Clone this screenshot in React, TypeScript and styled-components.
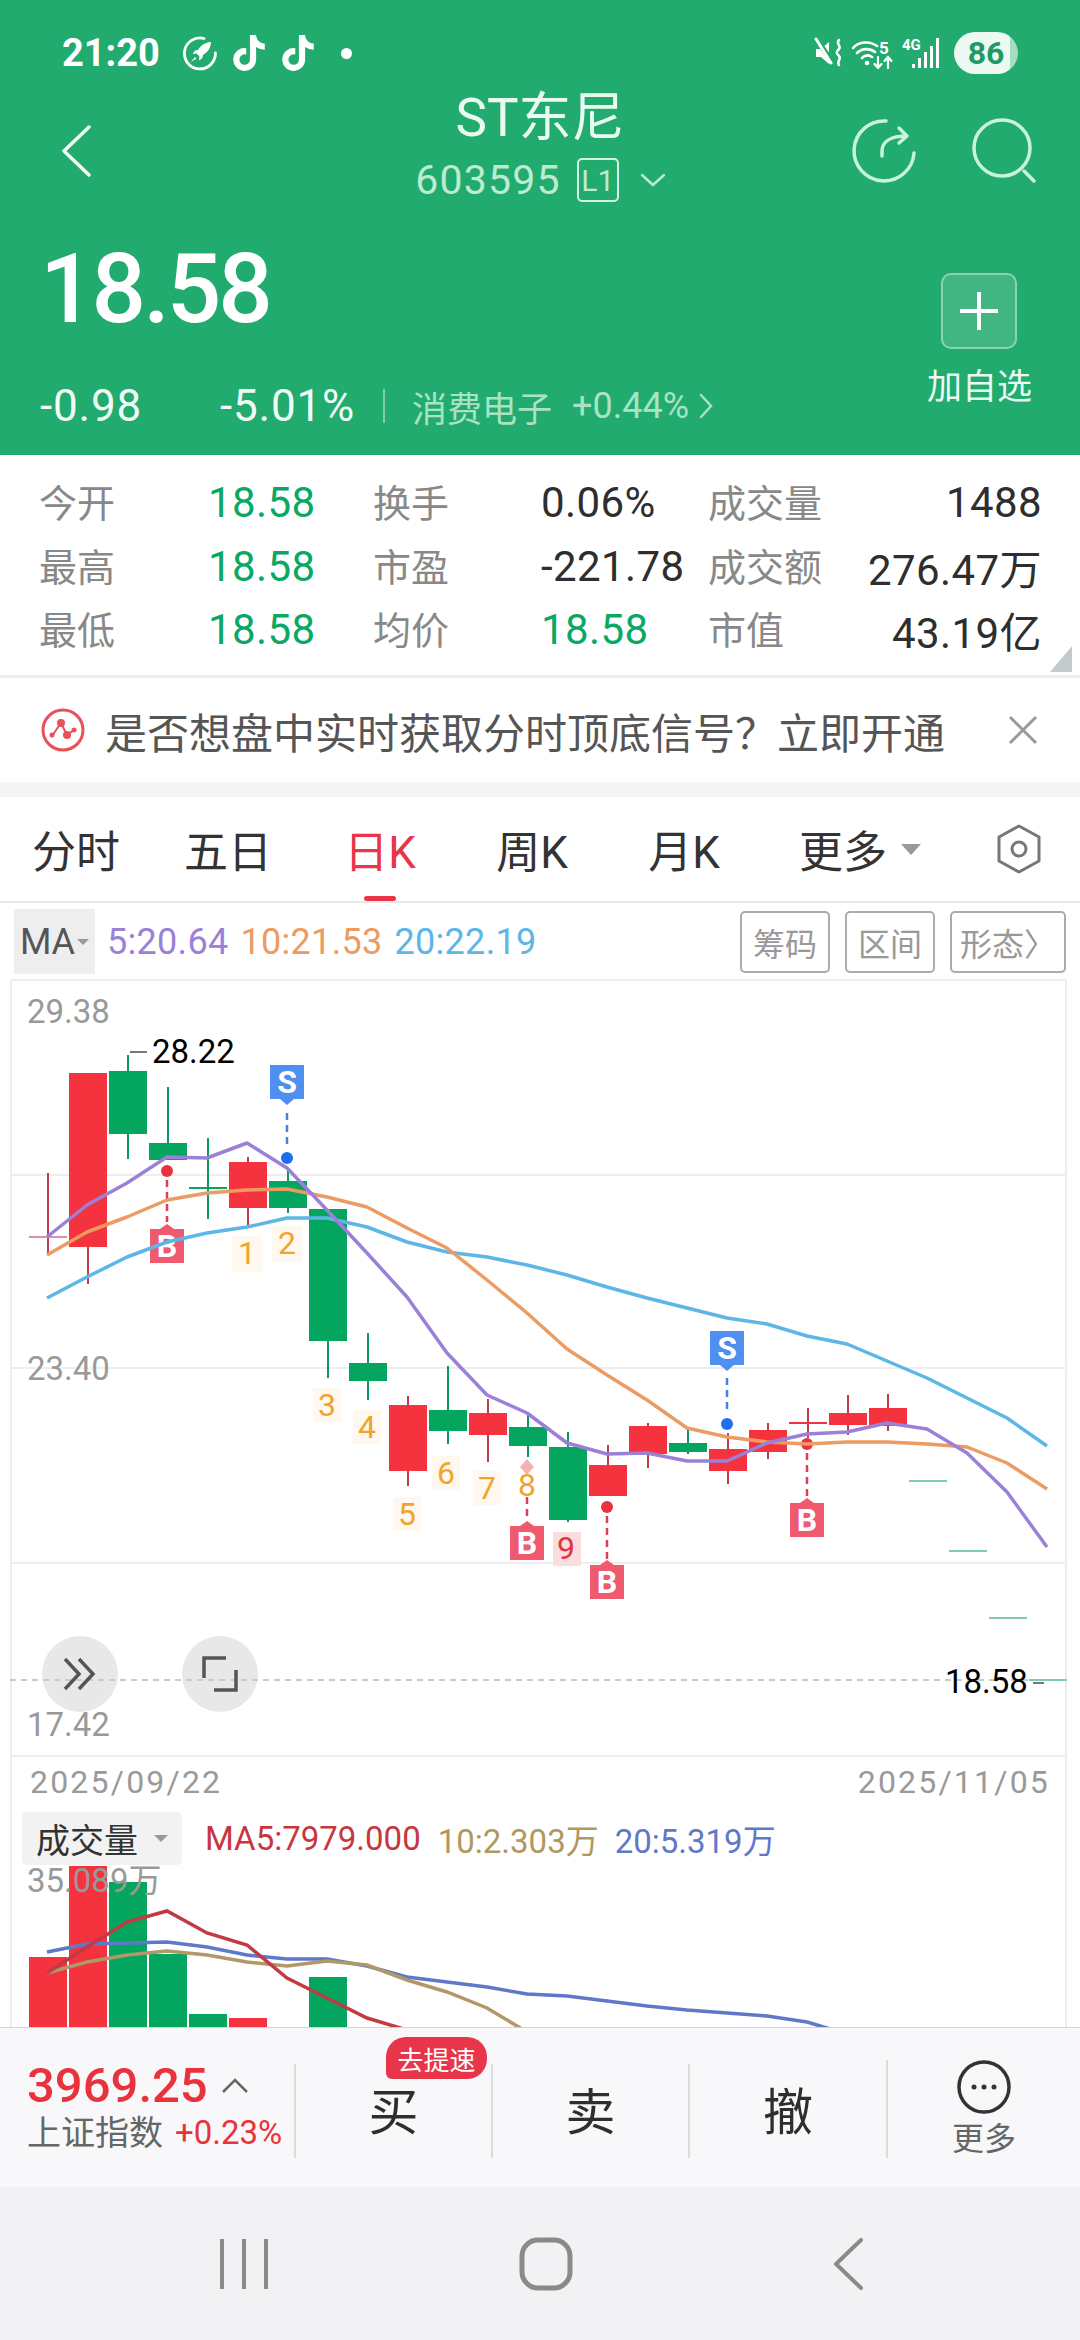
import React from "react";
import styled, { createGlobalStyle } from "styled-components";
import { FaTiktok } from "react-icons/fa6";

const FONT = `Roboto, "Noto Sans CJK SC", sans-serif`;

const GlobalStyle = createGlobalStyle`
  html, body { margin: 0; padding: 0; background: #fff; }
  body { font-family: ${FONT}; }
`;

// chart data, all in page pixels (the svg viewBoxes use the same numbers)
const X0 = 48;
const STEP = 40;
const xAt = (i: number) => X0 + STEP * i;

type Candle = [number, number, number, number, number, "r" | "g" | "f"];
const CANDLES: Candle[] = [
  [0, 1236, 1238, 1173, 1253, "r"],
  [1, 1073, 1247, 1073, 1284, "r"],
  [2, 1071, 1134, 1055, 1159, "g"],
  [3, 1143, 1160, 1087, 1160, "g"],
  [4, 1187, 1189, 1138, 1219, "g"],
  [5, 1162, 1208, 1157, 1225, "r"],
  [6, 1181, 1208, 1170, 1213, "g"],
  [7, 1209, 1341, 1209, 1378, "g"],
  [8, 1363, 1381, 1333, 1400, "g"],
  [9, 1405, 1471, 1396, 1486, "r"],
  [10, 1410, 1431, 1366, 1444, "g"],
  [11, 1413, 1435, 1399, 1462, "r"],
  [12, 1427, 1446, 1413, 1457, "g"],
  [13, 1447, 1520, 1432, 1522, "g"],
  [14, 1465, 1496, 1445, 1496, "r"],
  [15, 1426, 1454, 1423, 1468, "r"],
  [16, 1443, 1452, 1429, 1454, "g"],
  [17, 1449, 1471, 1433, 1484, "r"],
  [18, 1430, 1452, 1423, 1459, "r"],
  [19, 1422, 1424, 1408, 1438, "r"],
  [20, 1413, 1425, 1395, 1435, "r"],
  [21, 1408, 1426, 1394, 1431, "r"],
  [22, 1480, 1482, 1480, 1482, "f"],
  [23, 1550, 1552, 1550, 1552, "f"],
  [24, 1617, 1619, 1617, 1619, "f"],
  [25, 1679, 1681, 1679, 1681, "f"],
];

const MA5 = [1237, 1205, 1183, 1157, 1158, 1143, 1168, 1210, 1253, 1297, 1353, 1395, 1413, 1443, 1454, 1453, 1461, 1461, 1443, 1434, 1432, 1423, 1429, 1453, 1492, 1547];
const MA10 = [1255, 1232, 1217, 1200, 1193, 1190, 1189, 1197, 1207, 1228, 1248, 1280, 1313, 1349, 1375, 1400, 1428, 1437, 1442, 1444, 1442, 1442, 1444, 1447, 1463, 1489];
const MA20 = [1298, 1277, 1257, 1242, 1233, 1227, 1218, 1218, 1227, 1242, 1252, 1257, 1265, 1275, 1287, 1298, 1308, 1318, 1324, 1336, 1344, 1361, 1378, 1398, 1418, 1446];

const VOL_BARS: [number, number, string][] = [
  [0, 1957, "#f5333f"],
  [1, 1866, "#f5333f"],
  [2, 1882, "#04a55f"],
  [3, 1954, "#04a55f"],
  [4, 2014, "#04a55f"],
  [5, 2018, "#f5333f"],
  [7, 1977, "#04a55f"],
];
const VOL_MA5 = [1973, 1947, 1922, 1911, 1933, 1945, 1978, 1998, 2018, 2030];
const VOL_MA10 = [1973, 1962, 1955, 1951, 1955, 1962, 1966, 1961, 1965, 1980, 1992, 2008, 2032];
const VOL_MA20 = [1952, 1944, 1943, 1942, 1947, 1955, 1959, 1959, 1966, 1977, 1982, 1987, 1994, 1996, 2001, 2006, 2010, 2013, 2016, 2022, 2034];

const toPoints = (ys: number[]) => ys.map((y, i) => `${xAt(i) - 1},${y}`).join(" ");

const STATS = [
  ["今开", "18.58", "换手", "0.06%", "成交量", "1488"],
  ["最高", "18.58", "市盈", "-221.78", "成交额", "276.47万"],
  ["最低", "18.58", "均价", "18.58", "市值", "43.19亿"],
];
const TABS = ["分时", "五日", "日K", "周K", "月K"];

const Page = styled.div`
  width: 1080px;
  height: 2340px;
  overflow: hidden;
  display: flex;
  flex-direction: column;
  background: #fff;
  font-family: ${FONT};
`;

const Header = styled.header`
  height: 455px;
  background: #22ab6f;
  color: #fff;
  display: flex;
  flex-direction: column;
  flex: none;
`;

const StatusBar = styled.div`
  height: 66px;
  padding: 20px 62px 0;
  display: flex;
  align-items: center;
`;
const Clock = styled.span`
  font-size: 38px;
  font-weight: 700;
  margin-right: 22px;
`;
const StatusLeft = styled.div`
  display: flex;
  align-items: center;
  gap: 13px;
`;
const StatusDot = styled.i`
  width: 11px;
  height: 11px;
  border-radius: 50%;
  background: #fff;
  margin-left: 12px;
`;
const StatusRight = styled.div`
  margin-left: auto;
  display: flex;
  align-items: center;
  gap: 8px;
`;
const Battery = styled.div`
  width: 64px;
  height: 42px;
  margin-left: 6px;
  border-radius: 21px;
  background: linear-gradient(90deg, #edf9f3 88%, #a6dcbf 88%);
  color: #1f9a66;
  font-size: 32px;
  font-weight: 700;
  display: flex;
  align-items: center;
  justify-content: center;
`;

const NavRow = styled.div`
  height: 120px;
  display: grid;
  grid-template-columns: 1fr auto 1fr;
  align-items: start;
`;
const BackSlot = styled.div`
  padding: 39px 0 0 61px;
`;
const TitleBlock = styled.div`
  display: flex;
  flex-direction: column;
  align-items: center;
`;
const Title = styled.div`
  margin-top: 5px;
  font-size: 53px;
  line-height: 54px;
  color: #eafaf2;
`;
const CodeRow = styled.div`
  margin-top: 13px;
  height: 44px;
  display: flex;
  align-items: center;
  color: #bdebd2;
`;
const Code = styled.span`
  font-size: 41px;
  letter-spacing: 1.2px;
`;
const LevelTag = styled.span`
  margin-left: 16px;
  width: 42px;
  height: 44px;
  box-sizing: border-box;
  border: 2px solid #d5f3e3;
  border-radius: 5px;
  font-size: 30px;
  display: flex;
  align-items: center;
  justify-content: center;
`;
const NavIcons = styled.div`
  padding: 21px 38px 0 0;
  display: flex;
  justify-content: flex-end;
  gap: 38px;
`;

const QuoteRow = styled.div`
  flex: 1;
  display: flex;
  justify-content: space-between;
  padding: 0 48px 0 40px;
`;
const QuoteLeft = styled.div`
  display: flex;
  flex-direction: column;
`;
const Price = styled.div`
  margin-top: 33px;
  font-size: 96px;
  line-height: 100px;
  font-weight: 500;
  letter-spacing: -3px;
`;
const DeltaRow = styled.div`
  margin-top: 42px;
  height: 50px;
  display: flex;
  align-items: center;
`;
const Delta = styled.span<{ $w: number }>`
  width: ${(p) => p.$w}px;
  font-size: 44px;
  color: #f0fbf5;
  letter-spacing: 0.8px;
`;
const Bar = styled.i`
  width: 2px;
  height: 34px;
  background: #7fd0a8;
  margin: 0 27px 0 0;
`;
const Sector = styled.span`
  font-size: 35px;
  color: #a9e3c4;
`;
const SectorPct = styled.span`
  margin-left: 20px;
  font-size: 36px;
  color: #a9e3c4;
`;
const AddColumn = styled.div`
  display: flex;
  flex-direction: column;
  align-items: center;
  padding-top: 67px;
`;
const AddButton = styled.div`
  width: 76px;
  height: 76px;
  box-sizing: border-box;
  border: 2px solid rgba(255, 255, 255, 0.4);
  border-radius: 10px;
  background: rgba(255, 255, 255, 0.14);
  display: flex;
  align-items: center;
  justify-content: center;
`;
const AddLabel = styled.div`
  margin-top: 19px;
  font-size: 35px;
  line-height: 40px;
  color: #eafaf2;
`;

const StatsGrid = styled.section`
  position: relative;
  flex: none;
  height: 223px;
  box-sizing: border-box;
  padding: 16px 0 0 39px;
  border-bottom: 3px solid #eeeeee;
  display: grid;
  grid-template-columns: 169px 165px 168px 167px 120px 214px;
  grid-auto-rows: 63.5px;
  align-items: center;
`;
const StatLabel = styled.span`
  margin-top: -4px;
  font-size: 38px;
  color: #888;
  white-space: nowrap;
`;
const StatValue = styled.span<{ $green?: boolean; $right?: boolean }>`
  font-size: 42px;
  letter-spacing: 0.4px;
  color: ${(p) => (p.$green ? "#0aa864" : "#2e2e2e")};
  text-align: ${(p) => (p.$right ? "right" : "left")};
`;
const CornerMark = styled.i`
  position: absolute;
  right: 8px;
  bottom: 3px;
  width: 22px;
  height: 26px;
  background: #c3cbcf;
  clip-path: polygon(100% 0, 100% 100%, 0 100%);
`;

const Banner = styled.section`
  flex: none;
  height: 104px;
  display: flex;
  align-items: center;
  padding: 0 42px 0 41px;
`;
const BannerText = styled.span`
  margin-left: 20px;
  font-size: 42px;
  color: #555;
`;
const BannerClose = styled.svg`
  margin-left: auto;
`;
const Spacer = styled.div`
  flex: none;
  height: 15px;
  background: #f5f5f5;
`;

const Tabs = styled.nav`
  flex: none;
  height: 106px;
  box-sizing: border-box;
  border-bottom: 2px solid #e9e9e9;
  display: grid;
  grid-template-columns: repeat(5, 152px) 200px 1fr;
  align-items: center;
`;
const Tab = styled.div<{ $active?: boolean }>`
  position: relative;
  height: 100%;
  display: flex;
  align-items: center;
  justify-content: center;
  font-size: 44px;
  color: ${(p) => (p.$active ? "#e8354a" : "#333")};
  gap: 14px;
`;
const TabMark = styled.i`
  position: absolute;
  left: 60px;
  bottom: 0;
  width: 32px;
  height: 5px;
  border-radius: 3px;
  background: #e8354a;
`;
const Caret = styled.i<{ $size: number }>`
  width: 0;
  height: 0;
  border-left: ${(p) => p.$size}px solid transparent;
  border-right: ${(p) => p.$size}px solid transparent;
  border-top: ${(p) => p.$size * 1.1}px solid #999;
`;
const SettingSlot = styled.div`
  display: flex;
  justify-content: center;
  margin-left: 37px;
  width: 44px;
`;

const MaRow = styled.div`
  flex: none;
  height: 75px;
  box-sizing: border-box;
  padding: 5px 14px 3px;
  display: flex;
  align-items: center;
`;
const MaPicker = styled.div`
  width: 81px;
  height: 65px;
  background: #eeeeee;
  color: #555;
  font-size: 36px;
  display: flex;
  align-items: center;
  justify-content: center;
  gap: 2px;
`;
const MaValue = styled.span<{ $c: string }>`
  font-size: 36px;
  letter-spacing: 0.3px;
  color: ${(p) => p.$c};
  margin-left: 12px;
`;
const ToolGroup = styled.div`
  margin-left: auto;
  display: flex;
  gap: 15px;
`;
const ToolButton = styled.div<{ $w: number }>`
  width: ${(p) => p.$w}px;
  height: 62px;
  box-sizing: border-box;
  border: 2px solid #ababab;
  border-radius: 5px;
  font-size: 32px;
  color: #999;
  display: flex;
  align-items: center;
  justify-content: center;
`;

const ChartPanel = styled.div`
  position: relative;
  flex: none;
  height: 829px;
`;
const ChartSvg = styled.svg`
  display: block;
`;
const VolumeSvg = styled.svg`
  display: block;
  margin-top: -10px;
`;
const AxisText = styled.text`
  font-family: ${FONT};
  font-size: 33px;
  fill: #999;
`;
const PriceTag = styled.text`
  font-family: ${FONT};
  font-size: 33px;
  fill: #000;
`;
const DateText = styled.text<{ $end?: boolean }>`
  font-family: ${FONT};
  font-size: 32px;
  letter-spacing: 2.2px;
  fill: #999;
  text-anchor: ${(p) => (p.$end ? "end" : "start")};
`;
const PinLetter = styled.text`
  font-family: ${FONT};
  font-size: 32px;
  font-weight: 700;
  fill: #fff;
  text-anchor: middle;
`;
const SeqText = styled.text<{ $c?: string }>`
  font-family: ${FONT};
  font-size: 32px;
  fill: ${(p) => p.$c || "#f2a32c"};
  text-anchor: middle;
`;
const RoundButton = styled.div<{ $left: number }>`
  position: absolute;
  top: 658px;
  left: ${(p) => p.$left}px;
  width: 76px;
  height: 76px;
  border-radius: 50%;
  background: rgba(205, 205, 205, 0.45);
  display: flex;
  align-items: center;
  justify-content: center;
`;

const VolumePanel = styled.div`
  flex: none;
  height: 220px;
  display: flex;
  flex-direction: column;
`;
const VolumeHead = styled.div`
  height: 59px;
  box-sizing: border-box;
  padding: 5px 0 1px 22px;
  display: flex;
  align-items: center;
  background: linear-gradient(90deg, transparent 10px, #eee 10px, #eee 12px, transparent 12px, transparent 1065px, #eee 1065px, #eee 1067px, transparent 1067px);
`;
const VolumePicker = styled.div`
  width: 160px;
  height: 53px;
  border-radius: 5px;
  background: #f2f2f2;
  color: #333;
  font-size: 34px;
  display: flex;
  align-items: center;
  gap: 16px;
  padding-left: 14px;
  box-sizing: border-box;
`;
const VolumeValue = styled.span<{ $c: string; $gap: number }>`
  margin-left: ${(p) => p.$gap}px;
  font-size: 33px;
  color: ${(p) => p.$c};
`;

const BottomBar = styled.footer`
  flex: none;
  height: 160px;
  box-sizing: border-box;
  padding: 36px 0 35px;
  background: #f8f8fa;
  border-top: 1px solid #d4d4d4;
  display: grid;
  grid-template-columns: 294px 197px 197px 198px 1fr;
`;
const IndexCell = styled.div`
  padding-left: 27px;
  display: flex;
  flex-direction: column;
  justify-content: center;
  margin-top: -10px;
`;
const IndexTop = styled.div`
  display: flex;
  align-items: center;
  color: #e8333c;
  font-size: 49px;
  line-height: 54px;
  font-weight: 500;
`;
const IndexBottom = styled.div`
  display: flex;
  align-items: center;
  font-size: 34px;
  line-height: 40px;
  color: #666;
  white-space: nowrap;
`;
const IndexPct = styled.span`
  margin-left: 12px;
  font-size: 33px;
  color: #e8333c;
`;
const TradeCell = styled.div`
  position: relative;
  border-left: 2px solid #dcdcdc;
  padding-bottom: 6px;
  font-size: 50px;
  color: #2e2e2e;
  display: flex;
  align-items: center;
  justify-content: center;
`;
const SpeedBadge = styled.div`
  position: absolute;
  left: 90px;
  top: -27px;
  width: 101px;
  height: 42px;
  border-radius: 20px 20px 20px 6px;
  background: #e8354a;
  color: #fff;
  font-size: 26px;
  display: flex;
  align-items: center;
  justify-content: center;
`;
const MoreCell = styled.div`
  border-left: 2px solid #dcdcdc;
  display: flex;
  flex-direction: column;
  align-items: center;
  margin-top: -4px;
`;
const MoreLabel = styled.span`
  margin-top: 6px;
  font-size: 32px;
  line-height: 38px;
  color: #666;
`;

const SystemNav = styled.div`
  flex: 1;
  background: #f2f2f4;
  padding-left: 93px;
  display: grid;
  grid-template-columns: repeat(3, 302px);
  align-items: center;
  justify-items: center;
`;

// small svg parts
const RocketIcon = () => (
  <svg width="36" height="36" viewBox="0 0 36 36" fill="none">
    <path d="M22 3.5A15.5 15.5 0 1 0 33.4 18" stroke="#fff" strokeWidth="2.8" strokeLinecap="round" />
    <path d="M29 7c-6 .4-10 3-13 8l-3 .6-2.4 3.4 4-.4 2.8 2.8-.4 4 3.4-2.4.6-3c5-3 7.6-7 8-13z" fill="#fff" />
    <path d="M9 27l4-5 1.500 1.500z" fill="#fff" />
  </svg>
);

const MuteIcon = () => (
  <svg width="30" height="32" viewBox="0 0 30 32" fill="none">
    <path d="M2 12h5l8-7v22l-8-7H2z" fill="#fff" />
    <path d="M3 3l17 24" stroke="#22ab6f" strokeWidth="5" />
    <path d="M2 2l15 24" stroke="#fff" strokeWidth="3" strokeLinecap="round" />
    <path d="M25 3c-4 4 3 6 0 9s-3 4 0 7-3 6 0 9" stroke="#fff" strokeWidth="2.500" strokeLinecap="round" />
  </svg>
);

const WifiIcon = () => (
  <svg width="42" height="32" viewBox="0 0 42 32" fill="none">
    <path d="M1 11C7 4 18 4 25 9M5 16c5-5 13-5 18-1M10 21c3-3 7-3 10-1" stroke="#fff" strokeWidth="2.600" strokeLinecap="round" />
    <circle cx="15" cy="26" r="2.300" fill="#fff" />
    <text x="27" y="17" fontSize="17" fontWeight="700" fill="#fff" fontFamily="Roboto">5</text>
    <path d="M26 20v11M22.500 27l3.500 4 3.500-4M36 31V20M32.500 24l3.500-4 3.500 4" stroke="#fff" strokeWidth="2.200" strokeLinecap="round" />
  </svg>
);

const SignalIcon = () => (
  <svg width="38" height="32" viewBox="0 0 38 32" fill="none">
    <text x="0" y="13" fontSize="15" fontWeight="700" fill="#fff" fontFamily="Roboto">4G</text>
    <g fill="#fff">
      <rect x="10" y="27" width="3" height="4" />
      <rect x="16" y="21" width="3" height="10" />
      <rect x="22" y="15" width="3" height="16" />
      <rect x="28" y="9" width="3" height="22" />
      <rect x="34" y="1" width="3" height="30" />
    </g>
  </svg>
);

type PinProps = { x: number; y: number; letter: "B" | "S" };
// y is the top of the 34px square; B has its tip above, S below
const Pin = ({ x, y, letter }: PinProps) => {
  const fill = letter === "S" ? "#4f8ff0" : "#f05a6e";
  const tip = letter === "S" ? `${x - 7},${y + 34} ${x + 7},${y + 34} ${x},${y + 40}` : `${x - 7},${y} ${x + 7},${y} ${x},${y - 5}`;
  return (
    <g>
      <rect x={x - 17} y={y} width="34" height="34" fill={fill} />
      <polygon points={tip} fill={fill} />
      <PinLetter x={x} y={y + 28}>{letter}</PinLetter>
    </g>
  );
};

const Stem = ({ x, y1, y2, c, noDot }: { x: number; y1: number; y2: number; c: string; noDot?: boolean }) => (
  <g>
    <line x1={x} x2={x} y1={y1} y2={y2} stroke={c} strokeWidth="2.500" strokeDasharray="7 5" />
    {!noDot && <circle cx={x} cy={c === "#4a7fe0" ? y2 + 13 : y1 - 9} r="6" fill={c === "#4a7fe0" ? "#1e6ff0" : "#e8323f"} />}
  </g>
);

const CANDLE_COLORS = { r: "#f5333f", g: "#04a55f", f: "#7fccb3" };
const WICK_COLORS = { r: "#c23a4e", g: "#0a9a5c", f: "#7fccb3" };

const Candles = () => (
  <g>
    {CANDLES.map(([i, top, bottom, wt, wb, k]) => (
      <g key={i}>
        <line x1={xAt(i)} x2={xAt(i)} y1={wt} y2={wb} stroke={WICK_COLORS[k]} strokeWidth="2" />
        <rect x={xAt(i) - 19} y={top} width="38" height={bottom - top} fill={i === 0 ? "#d98fb0" : CANDLE_COLORS[k]} />
      </g>
    ))}
  </g>
);

const KLineChart = () => (
  <ChartSvg width="1080" height="829" viewBox="0 978 1080 829">
    <g stroke="#eee" strokeWidth="2">
      <line x1="11" x2="1066" y1="980" y2="980" />
      <line x1="11" x2="1066" y1="1175" y2="1175" />
      <line x1="11" x2="1066" y1="1368" y2="1368" />
      <line x1="11" x2="1066" y1="1563" y2="1563" />
      <line x1="11" x2="1066" y1="1756" y2="1756" />
      <line x1="11" x2="11" y1="980" y2="1807" />
      <line x1="1066" x2="1066" y1="980" y2="1807" />
    </g>
    <line x1="10" x2="1066" y1="1680" y2="1680" stroke="#bdbda8" strokeWidth="1.500" strokeDasharray="6 5" />
    <AxisText x="27" y="1023">29.38</AxisText>
    <AxisText x="27" y="1380">23.40</AxisText>
    <AxisText x="27" y="1736">17.42</AxisText>
    <DateText x="30" y="1793">2025/09/22</DateText>
    <DateText $end x="1050" y="1793">2025/11/05</DateText>

    <Candles />

    <line x1="130" x2="147" y1="1052" y2="1052" stroke="#777" strokeWidth="2" />
    <PriceTag x="152" y="1063">28.22</PriceTag>
    <line x1="1033" x2="1044" y1="1683" y2="1683" stroke="#777" strokeWidth="2" />
    <PriceTag x="945" y="1693">18.58</PriceTag>

    <rect x="232" y="1236" width="30" height="36" fill="#fef8ee" />
    <SeqText x="247" y="1264">1</SeqText>
    <rect x="272" y="1226" width="30" height="36" fill="#fef8ee" />
    <SeqText x="287" y="1254">2</SeqText>
    <rect x="313" y="1388" width="28" height="34" fill="#fef8ee" />
    <SeqText x="327" y="1416">3</SeqText>
    <rect x="353" y="1410" width="28" height="34" fill="#fef8ee" />
    <SeqText x="367" y="1438">4</SeqText>
    <rect x="393" y="1497" width="28" height="34" fill="#fef8ee" />
    <SeqText x="407" y="1525">5</SeqText>
    <rect x="432" y="1456" width="28" height="34" fill="#fef8ee" />
    <SeqText x="446" y="1484">6</SeqText>
    <rect x="473" y="1471" width="28" height="34" fill="#fef8ee" />
    <SeqText x="487" y="1499">7</SeqText>

    <Stem x={167} y1={1180} y2={1222} c="#d8405a" />
    <Stem x={287} y1={1113} y2={1145} c="#4a7fe0" />
    <Stem x={527} y1={1497} y2={1520} c="#d8405a" noDot />
    <Stem x={607} y1={1516} y2={1560} c="#d8405a" />
    <Stem x={727} y1={1378} y2={1411} c="#4a7fe0" />
    <Stem x={807} y1={1453} y2={1498} c="#d8405a" />

    <polygon points="527,1459 534,1467 527,1475 520,1467" fill="#f4b3b3" />
    <SeqText x="527" y="1496">8</SeqText>
    <rect x="553" y="1532" width="28" height="34" fill="#fbdde0" />
    <SeqText $c="#e0323f" x="566" y="1559">9</SeqText>

    <Pin x={167} y={1229} letter="B" />
    <Pin x={287} y={1065} letter="S" />
    <Pin x={527} y={1526} letter="B" />
    <Pin x={607} y={1565} letter="B" />
    <Pin x={727} y={1331} letter="S" />
    <Pin x={807} y={1503} letter="B" />

    <polyline points={toPoints(MA20)} fill="none" stroke="#5cb6e6" strokeWidth="3.500" strokeLinejoin="round" />
    <polyline points={toPoints(MA10)} fill="none" stroke="#ec9b62" strokeWidth="3.500" strokeLinejoin="round" />
    <polyline points={toPoints(MA5)} fill="none" stroke="#9b80d8" strokeWidth="3.500" strokeLinejoin="round" />
  </ChartSvg>
);

const VolumeChart = () => (
  <VolumeSvg width="1080" height="171" viewBox="0 1856 1080 171">
    <g stroke="#eee" strokeWidth="2">
      <line x1="11" x2="11" y1="1856" y2="2027" />
      <line x1="1066" x2="1066" y1="1856" y2="2027" />
    </g>
    {VOL_BARS.map(([i, top, c]) => (
      <rect key={i} x={xAt(i) - 19} y={top} width="38" height={2027 - top} fill={c} />
    ))}
    <AxisText x="27" y="1892">35.089万</AxisText>
    <polyline points={toPoints(VOL_MA20)} fill="none" stroke="#5f78c8" strokeWidth="3.500" />
    <polyline points={toPoints(VOL_MA10)} fill="none" stroke="#b09868" strokeWidth="3.500" />
    <polyline points={toPoints(VOL_MA5)} fill="none" stroke="#c23a44" strokeWidth="3.500" />
  </VolumeSvg>
);

export default function App() {
  return (
    <Page>
      <GlobalStyle />
      <Header>
        <StatusBar>
          <Clock>21:20</Clock>
          <StatusLeft>
            <RocketIcon />
            <FaTiktok size={36} color="#fff" />
            <FaTiktok size={36} color="#fff" />
            <StatusDot />
          </StatusLeft>
          <StatusRight>
            <MuteIcon />
            <WifiIcon />
            <SignalIcon />
            <Battery>86</Battery>
          </StatusRight>
        </StatusBar>
        <NavRow>
          <BackSlot>
            <svg width="32" height="52" viewBox="0 0 32 52" fill="none">
              <path d="M28 2L3 26l25 24" stroke="#f2fbf6" strokeWidth="3.500" strokeLinecap="round" strokeLinejoin="round" />
            </svg>
          </BackSlot>
          <TitleBlock>
            <Title>ST东尼</Title>
            <CodeRow>
              <Code>603595</Code>
              <LevelTag>L1</LevelTag>
              <svg width="24" height="14" viewBox="0 0 24 14" fill="none" style={{ marginLeft: 22 }}>
                <path d="M1 2l11 10L23 2" stroke="#bdebd2" strokeWidth="2.500" strokeLinecap="round" />
              </svg>
            </CodeRow>
          </TitleBlock>
          <NavIcons>
            <svg width="80" height="80" viewBox="0 0 80 80" fill="none">
              <path d="M42 14A30 30 0 1 0 70 46" stroke="#c9f3dc" strokeWidth="3.500" strokeLinecap="round" />
              <path d="M38 49v-5c0-9 8-15 25-15M55 21l8 8-8 7" stroke="#c9f3dc" strokeWidth="3.500" strokeLinecap="round" strokeLinejoin="round" />
            </svg>
            <svg width="80" height="80" viewBox="0 0 80 80" fill="none">
              <circle cx="40" cy="41" r="28" stroke="#c9f3dc" strokeWidth="3.500" />
              <path d="M62 64l10 10" stroke="#c9f3dc" strokeWidth="3.500" strokeLinecap="round" />
            </svg>
          </NavIcons>
        </NavRow>
        <QuoteRow>
          <QuoteLeft>
            <Price>18.58</Price>
            <DeltaRow>
              <Delta $w={180}>-0.98</Delta>
              <Delta $w={163}>-5.01%</Delta>
              <Bar />
              <Sector>消费电子</Sector>
              <SectorPct>+0.44%</SectorPct>
              <svg width="14" height="26" viewBox="0 0 14 26" fill="none" style={{ marginLeft: 10 }}>
                <path d="M2 2l10 11L2 24" stroke="#a9e3c4" strokeWidth="2.500" strokeLinecap="round" />
              </svg>
            </DeltaRow>
          </QuoteLeft>
          <AddColumn>
            <AddButton>
              <svg width="40" height="40" viewBox="0 0 40 40" fill="none">
                <path d="M20 1v38M1 20h38" stroke="#fff" strokeWidth="4" />
              </svg>
            </AddButton>
            <AddLabel>加自选</AddLabel>
          </AddColumn>
        </QuoteRow>
      </Header>

      <StatsGrid>
        {STATS.map((row, r) => (
          <React.Fragment key={r}>
            <StatLabel>{row[0]}</StatLabel>
            <StatValue $green>{row[1]}</StatValue>
            <StatLabel>{row[2]}</StatLabel>
            <StatValue $green={r === 2}>{row[3]}</StatValue>
            <StatLabel>{row[4]}</StatLabel>
            <StatValue $right>{row[5]}</StatValue>
          </React.Fragment>
        ))}
        <CornerMark />
      </StatsGrid>

      <Banner>
        <svg width="44" height="44" viewBox="0 0 44 44" fill="none">
          <circle cx="22" cy="22" r="20" stroke="#e8505a" strokeWidth="3" />
          <path d="M11 28l9-13 6 12 7-5" stroke="#e8505a" strokeWidth="2" />
          <circle cx="20" cy="15" r="4" fill="#e8505a" />
          <circle cx="26" cy="27" r="4" fill="#e8505a" />
          <circle cx="11" cy="27" r="2.500" fill="#e8505a" />
          <circle cx="33" cy="22" r="2.500" fill="#e8505a" />
        </svg>
        <BannerText>是否想盘中实时获取分时顶底信号？立即开通</BannerText>
        <BannerClose width="30" height="30" viewBox="0 0 30 30" fill="none">
          <path d="M2 2l26 26M28 2L2 28" stroke="#999" strokeWidth="3" />
        </BannerClose>
      </Banner>
      <Spacer />

      <Tabs>
        {TABS.map((t) => (
          <Tab key={t} $active={t === "日K"}>
            {t}
            {t === "日K" && <TabMark />}
          </Tab>
        ))}
        <Tab>
          更多
          <Caret $size={10} />
        </Tab>
        <SettingSlot>
          <svg width="44" height="50" viewBox="0 0 44 50" fill="none">
            <path d="M22 2l20 11v24L22 48 2 37V13z" stroke="#777" strokeWidth="3" strokeLinejoin="round" />
            <circle cx="22" cy="25" r="7" stroke="#777" strokeWidth="3" />
          </svg>
        </SettingSlot>
      </Tabs>

      <MaRow>
        <MaPicker>
          MA
          <Caret $size={6} />
        </MaPicker>
        <MaValue $c="#9b80d8">5:20.64</MaValue>
        <MaValue $c="#ec9b62">10:21.53</MaValue>
        <MaValue $c="#5cb6e6">20:22.19</MaValue>
        <ToolGroup>
          <ToolButton $w={90}>筹码</ToolButton>
          <ToolButton $w={90}>区间</ToolButton>
          <ToolButton $w={116}>形态〉</ToolButton>
        </ToolGroup>
      </MaRow>

      <ChartPanel>
        <KLineChart />
        <RoundButton $left={42}>
          <svg width="36" height="36" viewBox="0 0 36 36" fill="none">
            <path d="M3 3l14 15L3 33M17 3l14 15-14 15" stroke="#555" strokeWidth="3.500" />
          </svg>
        </RoundButton>
        <RoundButton $left={182}>
          <svg width="36" height="36" viewBox="0 0 36 36" fill="none">
            <path d="M2 22V2h22M34 14v20H12" stroke="#555" strokeWidth="3.500" />
          </svg>
        </RoundButton>
      </ChartPanel>

      <VolumePanel>
        <VolumeHead>
          <VolumePicker>
            成交量
            <Caret $size={7} />
          </VolumePicker>
          <VolumeValue $c="#c9353f" $gap={23}>MA5:7979.000</VolumeValue>
          <VolumeValue $c="#b09860" $gap={17}>10:2.303万</VolumeValue>
          <VolumeValue $c="#5f78c8" $gap={16}>20:5.319万</VolumeValue>
        </VolumeHead>
        <VolumeChart />
      </VolumePanel>

      <BottomBar>
        <IndexCell>
          <IndexTop>
            3969.25
            <svg width="26" height="16" viewBox="0 0 26 16" fill="none" style={{ marginLeft: 14 }}>
              <path d="M1 14L13 2l12 12" stroke="#666" strokeWidth="2.500" />
            </svg>
          </IndexTop>
          <IndexBottom>
            上证指数
            <IndexPct>+0.23%</IndexPct>
          </IndexBottom>
        </IndexCell>
        <TradeCell>
          买
          <SpeedBadge>去提速</SpeedBadge>
        </TradeCell>
        <TradeCell>卖</TradeCell>
        <TradeCell>撤</TradeCell>
        <MoreCell>
          <svg width="54" height="54" viewBox="0 0 54 54" fill="none">
            <circle cx="27" cy="27" r="25" stroke="#333" strokeWidth="3.500" />
            <circle cx="17" cy="27" r="2.500" fill="#333" />
            <circle cx="27" cy="27" r="2.500" fill="#333" />
            <circle cx="37" cy="27" r="2.500" fill="#333" />
          </svg>
          <MoreLabel>更多</MoreLabel>
        </MoreCell>
      </BottomBar>

      <SystemNav>
        <svg width="50" height="50" viewBox="0 0 50 50" fill="none">
          <path d="M3 1v48M25 1v48M47 1v48" stroke="#8a8a8a" strokeWidth="4" strokeLinecap="round" />
        </svg>
        <svg width="54" height="54" viewBox="0 0 54 54" fill="none">
          <rect x="3" y="3" width="48" height="48" rx="16" stroke="#8a8a8a" strokeWidth="5" />
        </svg>
        <svg width="30" height="52" viewBox="0 0 30 52" fill="none">
          <path d="M28 2L3 26l25 24" stroke="#8a8a8a" strokeWidth="4" strokeLinecap="round" strokeLinejoin="round" />
        </svg>
      </SystemNav>
    </Page>
  );
}
